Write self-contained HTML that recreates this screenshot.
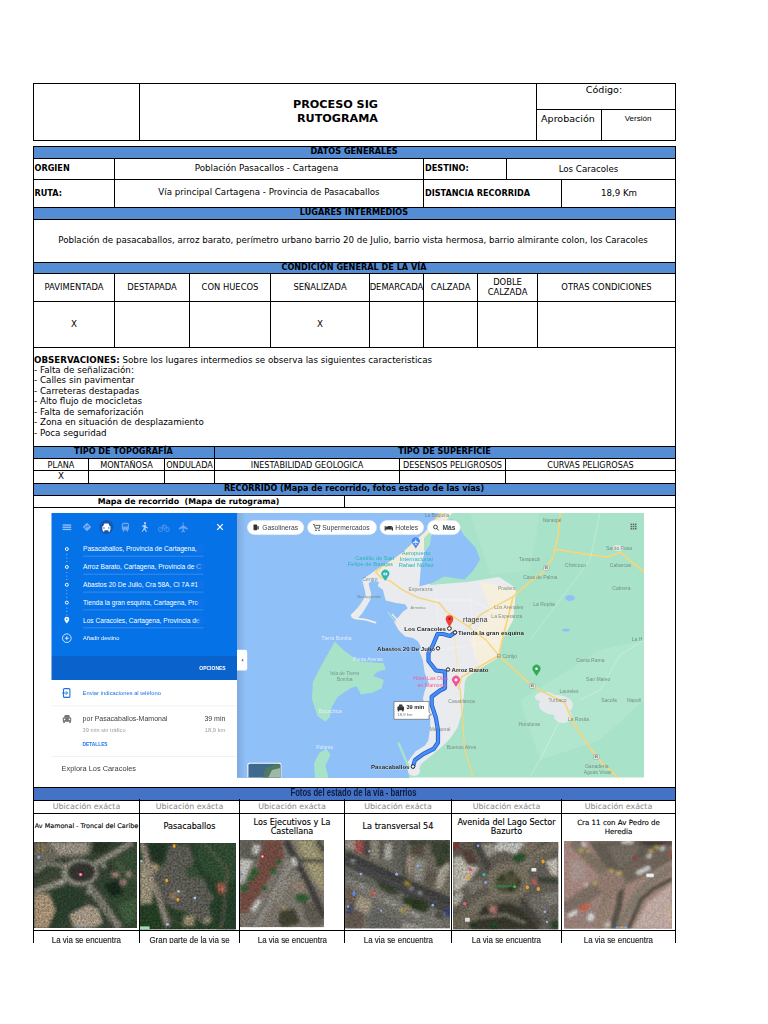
<!DOCTYPE html><html><head><meta charset="utf-8"><title>Rutograma</title><style>html,body{margin:0;padding:0;background:#fff;}body{width:768px;height:1024px;position:relative;overflow:hidden;}svg{position:absolute;display:block;}svg text{font-family:'Liberation Sans',sans-serif;}</style></head><body>
<div style="position:absolute;left:33px;top:83px;width:643px;height:1px;background:#000;"></div>
<div style="position:absolute;left:33px;top:140px;width:643px;height:1px;background:#000;"></div>
<div style="position:absolute;left:33px;top:83px;width:1px;height:58px;background:#000;"></div>
<div style="position:absolute;left:675px;top:83px;width:1px;height:58px;background:#000;"></div>
<div style="position:absolute;left:139px;top:83px;width:1px;height:58px;background:#000;"></div>
<div style="position:absolute;left:536px;top:83px;width:1px;height:58px;background:#000;"></div>
<div style="position:absolute;left:536px;top:109px;width:139px;height:1px;background:#000;"></div>
<div style="position:absolute;left:601px;top:109px;width:1px;height:32px;background:#000;"></div>
<div style="position:absolute;left:139px;top:83px;width:397px;height:57px;display:flex;align-items:center;justify-content:center;text-align:center;font-family:'DejaVu Sans','Liberation Sans',sans-serif;font-size:11.2px;font-weight:bold;color:#000;line-height:14px;white-space:nowrap;padding-top:1px;box-sizing:border-box;"><span><span style="padding-right:4px">PROCESO SIG</span><br>RUTOGRAMA</span></div>
<div style="position:absolute;left:534.5px;top:79px;width:139px;height:22px;display:flex;align-items:center;justify-content:center;text-align:center;font-family:'DejaVu Sans','Liberation Sans',sans-serif;font-size:9.55px;font-weight:normal;color:#000;line-height:1.15;white-space:nowrap;"><span>Código:</span></div>
<div style="position:absolute;left:536px;top:108.5px;width:64px;height:22px;display:flex;align-items:center;justify-content:center;text-align:center;font-family:'DejaVu Sans','Liberation Sans',sans-serif;font-size:9.55px;font-weight:normal;color:#000;line-height:1.15;white-space:nowrap;"><span>Aprobación</span></div>
<div style="position:absolute;left:601px;top:108px;width:74px;height:22px;display:flex;align-items:center;justify-content:center;text-align:center;font-family:'Liberation Sans',sans-serif;font-size:8px;font-weight:normal;color:#000;line-height:1.15;white-space:nowrap;"><span>Versión</span></div>
<div style="position:absolute;left:33px;top:146px;width:1px;height:797px;background:#000;"></div>
<div style="position:absolute;left:675px;top:146px;width:1px;height:797px;background:#000;"></div>
<div style="position:absolute;left:33px;top:146px;width:643px;height:13px;background:#548DD4;"></div>
<div style="position:absolute;left:33px;top:146px;width:643px;height:1px;background:#000;"></div>
<div style="position:absolute;left:33px;top:158px;width:643px;height:1px;background:#000;"></div>
<div style="position:absolute;left:33px;top:147px;width:642px;height:10px;display:flex;align-items:center;justify-content:center;text-align:center;font-family:'DejaVu Sans','Liberation Sans',sans-serif;font-size:8.15px;font-weight:bold;color:#000;line-height:1.15;white-space:nowrap;"><span>DATOS GENERALES</span></div>
<div style="position:absolute;left:33px;top:179px;width:643px;height:1px;background:#000;"></div>
<div style="position:absolute;left:114px;top:158px;width:1px;height:21px;background:#000;"></div>
<div style="position:absolute;left:423px;top:158px;width:1px;height:21px;background:#000;"></div>
<div style="position:absolute;left:506px;top:158px;width:1px;height:21px;background:#000;"></div>
<div style="position:absolute;left:34.5px;top:159px;width:78px;height:19px;display:flex;align-items:center;justify-content:flex-start;text-align:left;font-family:'DejaVu Sans','Liberation Sans',sans-serif;font-size:8.15px;font-weight:bold;color:#000;line-height:1.15;white-space:nowrap;"><span>ORGIEN</span></div>
<div style="position:absolute;left:112.5px;top:159px;width:308px;height:19px;display:flex;align-items:center;justify-content:center;text-align:center;font-family:'DejaVu Sans','Liberation Sans',sans-serif;font-size:8.72px;font-weight:normal;color:#000;line-height:1.15;white-space:nowrap;"><span>Población Pasacallos - Cartagena</span></div>
<div style="position:absolute;left:425px;top:159px;width:80px;height:19px;display:flex;align-items:center;justify-content:flex-start;text-align:left;font-family:'DejaVu Sans','Liberation Sans',sans-serif;font-size:8.15px;font-weight:bold;color:#000;line-height:1.15;white-space:nowrap;"><span>DESTINO:</span></div>
<div style="position:absolute;left:504px;top:160px;width:169px;height:19px;display:flex;align-items:center;justify-content:center;text-align:center;font-family:'DejaVu Sans','Liberation Sans',sans-serif;font-size:8.67px;font-weight:normal;color:#000;line-height:1.15;white-space:nowrap;"><span>Los Caracoles</span></div>
<div style="position:absolute;left:114px;top:179px;width:1px;height:28px;background:#000;"></div>
<div style="position:absolute;left:423px;top:179px;width:1px;height:28px;background:#000;"></div>
<div style="position:absolute;left:561px;top:179px;width:1px;height:28px;background:#000;"></div>
<div style="position:absolute;left:34.5px;top:181px;width:78px;height:26px;display:flex;align-items:center;justify-content:flex-start;text-align:left;font-family:'DejaVu Sans','Liberation Sans',sans-serif;font-size:8.15px;font-weight:bold;color:#000;line-height:1.15;white-space:nowrap;"><span>RUTA:</span></div>
<div style="position:absolute;left:115px;top:180px;width:308px;height:26px;display:flex;align-items:center;justify-content:center;text-align:center;font-family:'DejaVu Sans','Liberation Sans',sans-serif;font-size:8.67px;font-weight:normal;color:#000;line-height:1.15;white-space:nowrap;"><span>Vía principal Cartagena - Provincia de Pasacaballos</span></div>
<div style="position:absolute;left:425px;top:181px;width:136px;height:26px;display:flex;align-items:center;justify-content:flex-start;text-align:left;font-family:'DejaVu Sans','Liberation Sans',sans-serif;font-size:8.15px;font-weight:bold;color:#000;line-height:1.15;white-space:nowrap;"><span>DISTANCIA RECORRIDA</span></div>
<div style="position:absolute;left:562px;top:181px;width:114px;height:26px;display:flex;align-items:center;justify-content:center;text-align:center;font-family:'DejaVu Sans','Liberation Sans',sans-serif;font-size:8.67px;font-weight:normal;color:#000;line-height:1.15;white-space:nowrap;"><span>18,9 Km</span></div>
<div style="position:absolute;left:33px;top:207px;width:643px;height:13px;background:#548DD4;"></div>
<div style="position:absolute;left:33px;top:207px;width:643px;height:1px;background:#000;"></div>
<div style="position:absolute;left:33px;top:219px;width:643px;height:1px;background:#000;"></div>
<div style="position:absolute;left:33px;top:208px;width:642px;height:10px;display:flex;align-items:center;justify-content:center;text-align:center;font-family:'DejaVu Sans','Liberation Sans',sans-serif;font-size:8.15px;font-weight:bold;color:#000;line-height:1.15;white-space:nowrap;"><span>LUGARES INTERMEDIOS</span></div>
<div style="position:absolute;left:32px;top:220px;width:642px;height:41px;display:flex;align-items:center;justify-content:center;text-align:center;font-family:'DejaVu Sans','Liberation Sans',sans-serif;font-size:8.67px;font-weight:normal;color:#000;line-height:1.15;white-space:nowrap;"><span>Población de pasacaballos, arroz barato, perímetro urbano barrio 20 de Julio, barrio vista hermosa, barrio almirante colon, los Caracoles</span></div>
<div style="position:absolute;left:33px;top:262px;width:643px;height:12px;background:#548DD4;"></div>
<div style="position:absolute;left:33px;top:262px;width:643px;height:1px;background:#000;"></div>
<div style="position:absolute;left:33px;top:273px;width:643px;height:1px;background:#000;"></div>
<div style="position:absolute;left:33px;top:263px;width:642px;height:9px;display:flex;align-items:center;justify-content:center;text-align:center;font-family:'DejaVu Sans','Liberation Sans',sans-serif;font-size:8.15px;font-weight:bold;color:#000;line-height:1.15;white-space:nowrap;"><span>CONDICIÓN GENERAL DE LA VÍA</span></div>
<div style="position:absolute;left:114px;top:273px;width:1px;height:75px;background:#000;"></div>
<div style="position:absolute;left:189px;top:273px;width:1px;height:75px;background:#000;"></div>
<div style="position:absolute;left:270px;top:273px;width:1px;height:75px;background:#000;"></div>
<div style="position:absolute;left:369px;top:273px;width:1px;height:75px;background:#000;"></div>
<div style="position:absolute;left:423px;top:273px;width:1px;height:75px;background:#000;"></div>
<div style="position:absolute;left:477px;top:273px;width:1px;height:75px;background:#000;"></div>
<div style="position:absolute;left:537px;top:273px;width:1px;height:75px;background:#000;"></div>
<div style="position:absolute;left:33px;top:301px;width:643px;height:1px;background:#000;"></div>
<div style="position:absolute;left:33px;top:347px;width:643px;height:1px;background:#000;"></div>
<div style="position:absolute;left:34px;top:274px;width:80px;height:27px;display:flex;align-items:center;justify-content:center;text-align:center;font-family:'DejaVu Sans','Liberation Sans',sans-serif;font-size:8.4px;font-weight:normal;color:#000;line-height:9.5px;white-space:nowrap;"><span>PAVIMENTADA</span></div>
<div style="position:absolute;left:115px;top:274px;width:74px;height:27px;display:flex;align-items:center;justify-content:center;text-align:center;font-family:'DejaVu Sans','Liberation Sans',sans-serif;font-size:8.4px;font-weight:normal;color:#000;line-height:9.5px;white-space:nowrap;"><span>DESTAPADA</span></div>
<div style="position:absolute;left:190px;top:274px;width:80px;height:27px;display:flex;align-items:center;justify-content:center;text-align:center;font-family:'DejaVu Sans','Liberation Sans',sans-serif;font-size:8.4px;font-weight:normal;color:#000;line-height:9.5px;white-space:nowrap;"><span>CON HUECOS</span></div>
<div style="position:absolute;left:271px;top:274px;width:98px;height:27px;display:flex;align-items:center;justify-content:center;text-align:center;font-family:'DejaVu Sans','Liberation Sans',sans-serif;font-size:8.4px;font-weight:normal;color:#000;line-height:9.5px;white-space:nowrap;"><span>SEÑALIZADA</span></div>
<div style="position:absolute;left:370px;top:274px;width:53px;height:27px;display:flex;align-items:center;justify-content:center;text-align:center;font-family:'DejaVu Sans','Liberation Sans',sans-serif;font-size:8.4px;font-weight:normal;color:#000;line-height:9.5px;white-space:nowrap;"><span>DEMARCADA</span></div>
<div style="position:absolute;left:424px;top:274px;width:53px;height:27px;display:flex;align-items:center;justify-content:center;text-align:center;font-family:'DejaVu Sans','Liberation Sans',sans-serif;font-size:8.4px;font-weight:normal;color:#000;line-height:9.5px;white-space:nowrap;"><span>CALZADA</span></div>
<div style="position:absolute;left:478px;top:274px;width:59px;height:27px;display:flex;align-items:center;justify-content:center;text-align:center;font-family:'DejaVu Sans','Liberation Sans',sans-serif;font-size:8.4px;font-weight:normal;color:#000;line-height:9.5px;white-space:nowrap;"><span>DOBLE<br>CALZADA</span></div>
<div style="position:absolute;left:538px;top:274px;width:137px;height:27px;display:flex;align-items:center;justify-content:center;text-align:center;font-family:'DejaVu Sans','Liberation Sans',sans-serif;font-size:8.4px;font-weight:normal;color:#000;line-height:9.5px;white-space:nowrap;"><span>OTRAS CONDICIONES</span></div>
<div style="position:absolute;left:34px;top:302px;width:80px;height:45px;display:flex;align-items:center;justify-content:center;text-align:center;font-family:'DejaVu Sans','Liberation Sans',sans-serif;font-size:8.67px;font-weight:normal;color:#000;line-height:1.15;white-space:nowrap;"><span>X</span></div>
<div style="position:absolute;left:271px;top:302px;width:98px;height:45px;display:flex;align-items:center;justify-content:center;text-align:center;font-family:'DejaVu Sans','Liberation Sans',sans-serif;font-size:8.67px;font-weight:normal;color:#000;line-height:1.15;white-space:nowrap;"><span>X</span></div>
<div style="position:absolute;left:34px;top:354.5px;font-family:'DejaVu Sans','Liberation Sans',sans-serif;font-size:8.74px;line-height:10.47px;white-space:nowrap;"><b style="font-size:8.7px">OBSERVACIONES:</b> Sobre los lugares intermedios se observa las siguientes caracteristicas<br>- Falta de señalización:<br>- Calles sin pavimentar<br>- Carreteras destapadas<br>- Alto flujo de mocicletas<br>- Falta de semaforización<br>- Zona en situación de desplazamiento<br>- Poca seguridad</div>
<div style="position:absolute;left:33px;top:446px;width:182px;height:13px;background:#548DD4;"></div>
<div style="position:absolute;left:33px;top:446px;width:182px;height:1px;background:#000;"></div>
<div style="position:absolute;left:33px;top:458px;width:182px;height:1px;background:#000;"></div>
<div style="position:absolute;left:33px;top:447px;width:181px;height:10px;display:flex;align-items:center;justify-content:center;text-align:center;font-family:'DejaVu Sans','Liberation Sans',sans-serif;font-size:8.15px;font-weight:bold;color:#000;line-height:1.15;white-space:nowrap;"><span>TIPO DE TOPOGRAFÍA</span></div>
<div style="position:absolute;left:214px;top:446px;width:462px;height:13px;background:#548DD4;"></div>
<div style="position:absolute;left:214px;top:446px;width:462px;height:1px;background:#000;"></div>
<div style="position:absolute;left:214px;top:458px;width:462px;height:1px;background:#000;"></div>
<div style="position:absolute;left:214px;top:447px;width:461px;height:10px;display:flex;align-items:center;justify-content:center;text-align:center;font-family:'DejaVu Sans','Liberation Sans',sans-serif;font-size:8.15px;font-weight:bold;color:#000;line-height:1.15;white-space:nowrap;"><span>TIPO DE SUPERFICIE</span></div>
<div style="position:absolute;left:214px;top:446px;width:1px;height:12px;background:#000;"></div>
<div style="position:absolute;left:88px;top:458px;width:1px;height:25px;background:#000;"></div>
<div style="position:absolute;left:164px;top:458px;width:1px;height:25px;background:#000;"></div>
<div style="position:absolute;left:214px;top:458px;width:1px;height:25px;background:#000;"></div>
<div style="position:absolute;left:399px;top:458px;width:1px;height:25px;background:#000;"></div>
<div style="position:absolute;left:505px;top:458px;width:1px;height:25px;background:#000;"></div>
<div style="position:absolute;left:33px;top:470px;width:643px;height:1px;background:#000;"></div>
<div style="position:absolute;left:34px;top:460px;width:54px;height:11px;display:flex;align-items:center;justify-content:center;text-align:center;font-family:'DejaVu Sans','Liberation Sans',sans-serif;font-size:8.15px;font-weight:normal;color:#000;line-height:1.15;white-space:nowrap;"><span>PLANA</span></div>
<div style="position:absolute;left:89px;top:460px;width:75px;height:11px;display:flex;align-items:center;justify-content:center;text-align:center;font-family:'DejaVu Sans','Liberation Sans',sans-serif;font-size:8.15px;font-weight:normal;color:#000;line-height:1.15;white-space:nowrap;"><span>MONTAÑOSA</span></div>
<div style="position:absolute;left:165px;top:460px;width:49px;height:11px;display:flex;align-items:center;justify-content:center;text-align:center;font-family:'DejaVu Sans','Liberation Sans',sans-serif;font-size:8.15px;font-weight:normal;color:#000;line-height:1.15;white-space:nowrap;"><span>ONDULADA</span></div>
<div style="position:absolute;left:215px;top:460px;width:184px;height:11px;display:flex;align-items:center;justify-content:center;text-align:center;font-family:'DejaVu Sans','Liberation Sans',sans-serif;font-size:8.15px;font-weight:normal;color:#000;line-height:1.15;white-space:nowrap;"><span>INESTABILIDAD GEOLOGICA</span></div>
<div style="position:absolute;left:400px;top:460px;width:105px;height:11px;display:flex;align-items:center;justify-content:center;text-align:center;font-family:'DejaVu Sans','Liberation Sans',sans-serif;font-size:8.15px;font-weight:normal;color:#000;line-height:1.15;white-space:nowrap;"><span>DESENSOS PELIGROSOS</span></div>
<div style="position:absolute;left:506px;top:460px;width:169px;height:11px;display:flex;align-items:center;justify-content:center;text-align:center;font-family:'DejaVu Sans','Liberation Sans',sans-serif;font-size:8.15px;font-weight:normal;color:#000;line-height:1.15;white-space:nowrap;"><span>CURVAS PELIGROSAS</span></div>
<div style="position:absolute;left:34px;top:471px;width:54px;height:12px;display:flex;align-items:center;justify-content:center;text-align:center;font-family:'DejaVu Sans','Liberation Sans',sans-serif;font-size:8.67px;font-weight:normal;color:#000;line-height:1.15;white-space:nowrap;"><span>X</span></div>
<div style="position:absolute;left:33px;top:483px;width:643px;height:13px;background:#548DD4;"></div>
<div style="position:absolute;left:33px;top:483px;width:643px;height:1px;background:#000;"></div>
<div style="position:absolute;left:33px;top:495px;width:643px;height:1px;background:#000;"></div>
<div style="position:absolute;left:33px;top:484px;width:642px;height:10px;display:flex;align-items:center;justify-content:center;text-align:center;font-family:'DejaVu Sans','Liberation Sans',sans-serif;font-size:8.05px;font-weight:bold;color:#000;line-height:1.15;white-space:nowrap;"><span>RECORRIDO (Mapa de recorrido, fotos estado de las vías)</span></div>
<div style="position:absolute;left:33px;top:507px;width:643px;height:1px;background:#000;"></div>
<div style="position:absolute;left:344px;top:495px;width:1px;height:12px;background:#000;"></div>
<div style="position:absolute;left:33px;top:496px;width:311px;height:11px;display:flex;align-items:center;justify-content:center;text-align:center;font-family:'DejaVu Sans','Liberation Sans',sans-serif;font-size:7.88px;font-weight:bold;color:#000;line-height:1.15;white-space:nowrap;white-space:pre;"><span>Mapa de recorrido  (Mapa de rutograma)</span></div>
<svg style="left:50px;top:512px;width:596px;height:267px;" viewBox="50 512 596 267">
<defs>
<clipPath id="mapclip"><rect x="237" y="513" width="407" height="264.5"/></clipPath>
<filter id="soft" x="-5%" y="-5%" width="110%" height="110%"><feGaussianBlur stdDeviation="0.45"/></filter>
<linearGradient id="shd" x1="0" x2="1" y1="0" y2="0"><stop offset="0" stop-color="#405070" stop-opacity=".2"/><stop offset="1" stop-color="#405070" stop-opacity="0"/></linearGradient>
</defs>
<!-- ===== map ===== -->
<g clip-path="url(#mapclip)">
<rect x="237" y="513" width="407" height="265" fill="#a8e2c9"/>
<g filter="url(#soft)">
<!-- lighter green variations -->
<path d="M520 700 L600 650 L644 640 L644 700 L600 740 L540 760 Z" fill="#b6e8d2" opacity=".6"/>
<path d="M470 513 L540 513 L530 570 L490 575 Z" fill="#b6e8d2" opacity=".5"/>
<!-- urban -->
<polygon points="425,513 452,513 435,533 428,560 430,585 467,582 499,577 516,588 513,620 502,640 499,657 467,677 464.8,682 463,709.4 457.5,727.6 450.2,738.5 442.9,745.8 432,755 421,764 418,772 405,772 400,640 340,620 360,570 400,540" fill="#e9ebee"/>
<polygon points="480,582 516,588 513,620 502,640 499,657 480,668 470,640 490,610" fill="#f6efdd"/>
<polygon points="425,513 452,513 440,528 428,545 400,560 380,575 370,572 395,548" fill="#f3ecd8"/>
<ellipse cx="556" cy="705" rx="17" ry="10" fill="#e6e9ec"/>
<ellipse cx="563" cy="716" rx="9" ry="7" fill="#e6e9ec"/>
<ellipse cx="545" cy="697" rx="10" ry="5" fill="#e6e9ec"/>
<ellipse cx="618" cy="548" rx="6" ry="3" fill="#dfe8e2"/>
<!-- roads -->
<g fill="none" stroke="#f7d57a" stroke-width="1.7" stroke-linecap="round" stroke-linejoin="round">
<path d="M560.4 513 L557.5 539.4 L553.2 556.6 L544.6 570.9 L527.4 583.8 L513.1 596.7 L507.4 619.6 L501.6 642.5 L498.8 655.4"/>
<path d="M498.8 655.4 L516 671.2 L530.3 684.1 L544.6 692.7 L564.7 702.7 L573.3 722.8 L590.5 748.6 L601.9 762.9 L617.7 777"/>
<path d="M556.1 549.4 L579 553.1 L607.7 557.1 L620.5 552.3 L644 572"/>
<path d="M498.8 655.4 L481.6 665.5 L461.5 676.9 L458.7 688.4"/>
<path d="M460 688.4 L463 722.8 L464.4 748.6 L473 777" stroke-width="1.3"/>
<path d="M513.1 596.7 L481.6 613.9 L468.5 626.7 L446.7 612.1 L439.4 603 L417.5 597.5 L402.9 590.2 L390.2 581.1 L381 577.4 L375.6 572 L402.9 548.3 L424.8 530 L439.4 515.5 L442 512" stroke-width="1.5"/>
<path d="M468.5 626.7 L486 640 L498.8 655.4" stroke-width="1.3"/>
<path d="M447 612 L455 640 L458 676" stroke="#fbe6ad" stroke-width="1.1"/>
</g>
<g fill="none" stroke="#ffffff" stroke-width=".6" opacity=".45">
<path d="M430 600 L470 600 L495 612"/><path d="M440 650 L470 645 L498 640"/><path d="M450 700 L461 700"/><path d="M435 590 L440 640"/><path d="M470 590 L475 660"/>
<path d="M644 640 L620 655 L600 690 L580 700"/><path d="M560 720 L540 760 L530 777"/><path d="M600 513 L590 560 L560 600 L530 640"/>
</g>
<!-- small lakes -->
<ellipse cx="570" cy="598" rx="5" ry="3" fill="#8fc0f8"/>
<ellipse cx="566" cy="630" rx="4" ry="1.6" fill="#8fc0f8"/>
<!-- sea -->
<polygon points="237,513 439.4,513 424.8,531.9 402.9,551.9 392.1,560 379,567.8 370,574.3 362.1,579.5 364.7,590 366,597.8 359.5,608.2 351,614.7 351.7,618 357,619.2 362.1,613.4 364.7,609.5 370,600.4 371.25,593.9 368.6,583.4 372,580.5 379,582.1 377.8,586 383,590 385.6,600.4 396,603 405.1,604.3 407.7,608.2 402.5,612.1 397.3,618.6 394,622 398.6,630.3 405.1,636.5 412.9,638 418.1,641.5 421,647 419.2,651 422.9,660.2 424.7,672.9 428.3,682 424.7,691.1 422.9,698.4 426,708 430.2,718.5 430.2,727.6 428.3,740.4 424.7,745.8 415.6,751.3 410.1,758.6 406.5,764 408,771 409.5,778 237,778" fill="#8fc0f8"/>
<path d="M355 618.3 L366 619.6 L375.5 622.6" stroke="#f3f0e6" stroke-width="1.8" fill="none" stroke-linecap="round"/>
<path d="M351.5 616 L360 606.5 L366 597" stroke="#f6f1e2" stroke-width="2.2" fill="none" opacity=".8"/>
<!-- lagoon -->
<polygon points="447,521 452,519 457,522 463,534 475.8,548 480.1,559.4 473,570.9 464.4,579.5 444.3,576.6 432.1,583 419.3,586.6 421.1,564.7 426.6,546.5 432.1,533.7 439.4,526 444,522" fill="#8fc0f8"/>
<polygon points="424,538 432,530 430,545 424,552" fill="#a8e2c9"/>
<!-- inner bay islands -->
<path d="M392 614 L399 622 L404 630" stroke="#e9ebee" stroke-width="1.6" fill="none"/><path d="M388 612 L396 623" stroke="#b9e6cf" stroke-width="1" fill="none"/>
<!-- Tierra Bomba -->
<polygon points="334.8,641.5 344.2,650.8 358.8,661.3 383.8,663.3 385.8,669.6 377.5,671.7 373.3,675.8 383.8,680 381.7,688.3 373.3,692.5 360.8,694.6 356.7,686.3 350.4,688.3 337.9,696.7 331.7,707.1 329.6,717.5 325.4,721.7 317.1,715.4 311.9,698.8 312.9,682.1 321.3,665.4 329.6,650.8" fill="#a8e2c9"/>
<!-- Baru -->
<polygon points="315,778 314,763.3 319.2,752.9 326.5,748.8 330.6,755 325.4,765.4 328.5,778" fill="#a8e2c9"/>
<path d="M398.3 742.5 L404 756 L413 777" stroke="#a8e2c9" stroke-width="2.4" fill="none"/>
<ellipse cx="414" cy="771" rx="6" ry="5" fill="#e9ebee"/>
</g>
<!-- route -->
<path d="M455 632.5 L450 636 L443 634 L437.5 634 L433 645 L428.5 653 L428.5 661 L436 670.5 L445 671.7 L445 688 L440 690.5 L431.7 696.7 L431.7 705 L435.8 717.5 L438 730 L438 742.5 L433.75 748.75 L423.3 754 L415 760 L413 766.5" fill="none" stroke="#1a5fd0" stroke-width="4.2" stroke-linejoin="round" stroke-linecap="round"/>
<path d="M455 632.5 L450 636 L443 634 L437.5 634 L433 645 L428.5 653 L428.5 661 L436 670.5 L445 671.7 L445 688 L440 690.5 L431.7 696.7 L431.7 705 L435.8 717.5 L438 730 L438 742.5 L433.75 748.75 L423.3 754 L415 760 L413 766.5" fill="none" stroke="#4a8df7" stroke-width="2.6" stroke-linejoin="round" stroke-linecap="round"/>
<!-- place labels -->
<g font-size="5" fill="#6f7f76" text-anchor="middle" opacity=".85">
<text x="552" y="521.5">Naranjal</text><text x="619" y="550">Santa Rosa</text><text x="529.4" y="561">Tarapacá</text><text x="575.5" y="567">Chiricoco</text><text x="620.5" y="567">Cabarcas</text><text x="540.3" y="579">Casa de Palma</text><text x="621.4" y="590">Cabrera</text><text x="506.8" y="590">Pradera</text><text x="544" y="606">La Ropita</text><text x="508.8" y="609">Los Arenales</text><text x="506.8" y="618">La Esperanza</text><text x="506.8" y="658">El Cortijo</text><text x="590.4" y="661.5">Canta Rama</text><text x="598.2" y="680.5">San Mateo</text><text x="569" y="692.5">Laureles</text><text x="557.5" y="701.5">Turbaco</text><text x="609" y="701.5">Sacofa</text><text x="634" y="701.5">Napoli</text><text x="578.4" y="721">La Rosita</text><text x="529.4" y="726">Honduras</text><text x="461.5" y="703">Casablanca</text><text x="440" y="731">Mamonal</text><text x="461.5" y="748.5">Buenos Aires</text><text x="596.8" y="768">Ganadería</text><text x="597.6" y="774">Aguas Vivas</text><text x="420.5" y="590.5">Esperanza</text><text x="437" y="517">La Boquilla</text><text x="370" y="581.2">Centro</text><text x="369" y="598.3" font-size="4.4">Bocagrande</text><text x="418" y="609" font-size="4">Armenia</text><text x="637" y="641">La H</text>
</g>
<g font-size="5" fill="#e8f0fe" text-anchor="middle" opacity=".95">
<text x="336.6" y="640">Tierra Bomba</text><text x="368.1" y="660.5">Punta Arenas</text><text x="330.3" y="713">Bocachica</text><text x="324.6" y="749">Polonia</text>
</g>
<g font-size="5" fill="#7d9a86" text-anchor="middle"><text x="344.6" y="675">Isla de Tierra</text><text x="344.6" y="681">Bomba</text></g>
<g font-size="5.8" fill="#2bb5b5" text-anchor="middle"><text x="374.7" y="560">Castillo de San</text><text x="370.4" y="566">Felipe de Barajas</text><text x="416.2" y="554.5">Aeropuerto</text><text x="416.2" y="560.5">Internacional</text><text x="416.2" y="567">Rafael Núñez</text></g>
<g font-size="5.3" fill="#f0579b" text-anchor="middle"><text x="430.6" y="680">Hotel Las Olas</text><text x="432" y="686.5">en Mamonal</text></g>
<text x="463" y="622" font-size="7.2" fill="#3a3a3a" text-anchor="start">rtagena</text>
<!-- waypoint labels -->
<g font-size="6.1" fill="#1f1f1f" font-weight="bold" stroke="#fff" stroke-width=".25" paint-order="stroke">
<text x="446" y="630.5" text-anchor="end">Los Caracoles</text>
<text x="458" y="634.5">Tienda la gran esquina</text>
<text x="435" y="650.5" text-anchor="end">Abastos 20 De Julio</text>
<text x="451.5" y="671.5">Arroz Barato</text>
<text x="409.5" y="768.5" text-anchor="end">Pasacaballos</text>
</g>
<g fill="#fff" stroke="#222" stroke-width="1">
<circle cx="449.4" cy="628.5" r="1.9"/><circle cx="455" cy="632.5" r="1.7"/><circle cx="438" cy="648.3" r="1.7"/><circle cx="448" cy="669.5" r="1.7"/><circle cx="413" cy="766.5" r="1.8"/>
</g>
<!-- red pin -->
<path d="M449.5 627 C446.5 622 445.7 620.5 445.7 619 A3.8 3.8 0 0 1 453.3 619 C453.3 620.5 452.5 622 449.5 627Z" fill="#ea4335"/>
<circle cx="449.5" cy="618.8" r="1.2" fill="#b31412"/>
<!-- poi pins -->
<path d="M415.8 548.6 l-3.3 -5 a4 4 0 1 1 6.6 0z" fill="#4285f4"/><path d="M415.8 538.8 v2 l2.6 1.7 v.6 l-2.6 -.8 v1.5 l.8 .6 v.4 l-.8 -.2 l-.8 .2 v-.4 l.8 -.6 v-1.5 l-2.6 .8 v-.6 l2.6 -1.7z" fill="#fff" stroke="#fff" stroke-width=".3"/>
<path d="M385.3 581 l-3.3 -5 a4 4 0 1 1 6.6 0z" fill="#2bb5b5"/><rect x="383.5" y="572.7" width="3.6" height="2.6" rx=".5" fill="#fff"/><circle cx="385.3" cy="574" r=".8" fill="#2bb5b5"/>
<path d="M536.5 676 l-3.3 -5 a4 4 0 1 1 6.6 0z" fill="#34a853"/><circle cx="536.5" cy="668.8" r="1.3" fill="#fff"/>
<path d="M456 687 l-3.3 -5 a4 4 0 1 1 6.6 0z" fill="#f0579b"/><circle cx="456" cy="679.8" r="1.5" fill="#fff"/>
<!-- route shields -->
<g fill="#fff" stroke="#777" stroke-width=".4"><rect x="543.5" y="565.5" width="5.5" height="4.6" rx="1"/><rect x="529.5" y="683.5" width="5.5" height="4.6" rx="1"/><rect x="593.5" y="754.5" width="5.5" height="4.6" rx="1"/></g>
<g font-size="3.2" fill="#444" text-anchor="middle" font-weight="bold"><text x="546.3" y="569.2">90</text><text x="532.3" y="687.2">90</text><text x="596.3" y="758.2">90</text></g>
<!-- duration box -->
<path d="M394 701.5 H429 V712 L431.5 715 L429 715 V719.3 H394 Z" fill="#fff" stroke="#555" stroke-width=".6"/>
<g fill="#333"><rect x="397.4" y="706.6" width="6.6" height="3.6" rx=".8"/><path d="M398.4 706.8 L399.3 704.4 H402.1 L403 706.8Z"/><rect x="397.8" y="709.8" width="1.4" height="1.6"/><rect x="402.2" y="709.8" width="1.4" height="1.6"/></g>
<text x="406.5" y="709.3" font-size="5.6" font-weight="bold" fill="#222">39 min</text>
<text x="397.5" y="716.3" font-size="4.2" fill="#777">18,9 km</text>
<!-- chips -->
<g fill="#fff" stroke="#d6dbe3" stroke-width=".4">
<rect x="247.2" y="520.3" width="56.7" height="14.4" rx="7.2"/><rect x="307.4" y="520.3" width="69.3" height="14.4" rx="7.2"/><rect x="379.8" y="520.3" width="44" height="14.4" rx="7.2"/><rect x="427.3" y="520.3" width="33" height="14.4" rx="7.2"/>
</g>
<g font-size="6.7" fill="#3c4043">
<text x="262.3" y="529.8">Gasolineras</text><text x="322.3" y="529.8">Supermercados</text><text x="395.3" y="529.8">Hoteles</text><text x="442.5" y="529.8" font-weight="bold">Más</text>
</g>
<g fill="#333">
<rect x="253.5" y="524.6" width="3.6" height="5.6" rx=".6"/><rect x="257.4" y="526" width="1.3" height="3.6" rx=".5"/>
<path d="M313 524.6 h1.4 l.9 3.6 h4 l.8-2.8 h-4.6" fill="none" stroke="#333" stroke-width=".8"/><circle cx="316" cy="530.2" r=".8"/><circle cx="319" cy="530.2" r=".8"/>
<path d="M385.2 526 v4.6 M385.2 529 h7.2 v1.6 M392.4 529 v-1.2 a1.2 1.2 0 0 0 -1.2 -1.2 h-3.2 v2.4" fill="none" stroke="#222" stroke-width="1"/><rect x="386" y="526.6" width="5.6" height="2.4"/>
<circle cx="435.5" cy="527" r="1.9" fill="none" stroke="#333" stroke-width=".9"/><path d="M436.9 528.5 l1.8 1.9" stroke="#333" stroke-width=".9"/>
</g>
<g fill="#5f6368"><rect x="630.6" y="523.6" width="1.5" height="1.5"/><rect x="632.8" y="523.6" width="1.5" height="1.5"/><rect x="635" y="523.6" width="1.5" height="1.5"/><rect x="630.6" y="525.8" width="1.5" height="1.5"/><rect x="632.8" y="525.8" width="1.5" height="1.5"/><rect x="635" y="525.8" width="1.5" height="1.5"/><rect x="630.6" y="528" width="1.5" height="1.5"/><rect x="632.8" y="528" width="1.5" height="1.5"/><rect x="635" y="528" width="1.5" height="1.5"/></g>
<rect x="237" y="513" width="9" height="264.5" fill="url(#shd)"/>
<!-- collapse handle -->
<path d="M237 649.7 H245 a2.2 2.2 0 0 1 2.2 2.2 V668.4 a2.2 2.2 0 0 1 -2.2 2.2 H237Z" fill="#fff"/>
<path d="M243.2 658.6 L241.4 660.2 L243.2 661.8Z" fill="#5f6368"/>
<!-- satellite thumb -->
<rect x="247.4" y="762.7" width="34" height="18" rx="2" fill="#fff"/>
<rect x="248.4" y="763.7" width="32" height="17" rx="1.5" fill="#3e6a8e"/>
<path d="M262 778 L266 768 L276 764 L280.4 764 L280.4 778Z" fill="#4e7a62"/>
<path d="M268 778 L272 770 L280.4 768 L280.4 778Z" fill="#9fb8a8"/>
</g>
<!-- ===== left panel ===== -->
<rect x="51.5" y="513" width="185.5" height="264.5" fill="#fff"/>
<rect x="51.5" y="513" width="185.5" height="143" fill="#0572e8"/>
<rect x="51.5" y="656" width="185.5" height="24" fill="#0a63cd"/>
<!-- mode icons -->
<g fill="#9cc2f5">
<rect x="62.6" y="524.4" width="8.6" height="1.3"/><rect x="62.6" y="526.6" width="8.6" height="1.3"/><rect x="62.6" y="528.8" width="8.6" height="1.3"/>
</g>
<path d="M87 522.8 L91.2 527 L87 531.2 L82.8 527Z" fill="#7fb0f3"/><path d="M85.4 528.4 V526.4 H88.4 M87.4 525.2 L88.8 526.4 L87.4 527.6" fill="none" stroke="#1a73e8" stroke-width=".8"/>
<circle cx="106.4" cy="527" r="7" fill="#1a56b0"/>
<g fill="#fff"><rect x="102.3" y="526" width="8.2" height="4.2" rx=".9"/><path d="M103.2 526.3 L104.3 523.6 H108.5 L109.6 526.3Z"/><rect x="102.8" y="529.6" width="1.6" height="2"/><rect x="108.4" y="529.6" width="1.6" height="2"/></g>
<g fill="#1a73e8"><circle cx="104" cy="528" r=".8"/><circle cx="108.8" cy="528" r=".8"/></g>
<g fill="#6fa6f1"><rect x="121.8" y="522.8" width="7.2" height="7.4" rx="1.6"/><rect x="122.8" y="530" width="1.4" height="1.6"/><rect x="126.6" y="530" width="1.4" height="1.6"/></g>
<rect x="122.9" y="524" width="5" height="2.6" fill="#1a73e8"/>
<g fill="#b5d0f7"><circle cx="145" cy="523.2" r="1.1"/><path d="M143.2 525 L145.6 524.6 L146.6 527 L148.2 527.8 L147.8 528.6 L145.8 527.8 L145.4 529 L147 531.6 L146.2 532 L144.2 529.4 L142.6 532 L141.8 531.6 L143.6 528.4 L143.8 526 L142.4 527.2 L142 526.6Z"/></g>
<g fill="none" stroke="#5d9bf0" stroke-width=".8"><circle cx="160.6" cy="529.4" r="2.2"/><circle cx="167" cy="529.4" r="2.2"/><path d="M160.6 529.4 L163.2 525 H165.6 L167 529.4 M163.2 525 L164.4 529.4"/></g>
<path d="M183.2 522.4 V525.4 L187.4 528.2 V529.2 L183.6 528 V530.4 L184.8 531.4 V532 L183.2 531.6 L181.6 532 V531.4 L182.8 530.4 V528 L179 529.2 V528.2 L183.2 525.4Z" fill="#6fa6f1" stroke="#6fa6f1" stroke-width=".5"/>
<path d="M217.2 524.2 L222.8 529.8 M222.8 524.2 L217.2 529.8" stroke="#fff" stroke-width="1.2"/>
<!-- waypoints -->
<g fill="none" stroke="#fff" stroke-width="1"><circle cx="66.8" cy="549" r="1.5"/><circle cx="66.8" cy="567" r="1.5"/><circle cx="66.8" cy="584.8" r="1.5"/><circle cx="66.8" cy="602.6" r="1.5"/></g>
<g fill="#a9c9f6"><circle cx="66.8" cy="554.5" r=".55"/><circle cx="66.8" cy="558" r=".55"/><circle cx="66.8" cy="561.5" r=".55"/><circle cx="66.8" cy="572.5" r=".55"/><circle cx="66.8" cy="576" r=".55"/><circle cx="66.8" cy="579.5" r=".55"/><circle cx="66.8" cy="590.3" r=".55"/><circle cx="66.8" cy="593.8" r=".55"/><circle cx="66.8" cy="597.3" r=".55"/><circle cx="66.8" cy="608" r=".55"/><circle cx="66.8" cy="611.5" r=".55"/><circle cx="66.8" cy="615" r=".55"/></g>
<path d="M66.8 623.6 C64.8 620.8 64.4 620 64.4 619.2 A2.4 2.4 0 0 1 69.2 619.2 C69.2 620 68.8 620.8 66.8 623.6Z" fill="#fff"/><circle cx="66.8" cy="619.2" r=".8" fill="#1a73e8"/>
<g font-size="6.6" fill="#fff">
<text x="83" y="551">Pasacaballos, Provincia de Cartagena,</text>
<text x="83" y="569">Arroz Barato, Cartagena, Provincia de C</text>
<text x="83" y="587">Abastos 20 De Julio, Cra 58A, Cl 7A #1</text>
<text x="83" y="604.8">Tienda la gran esquina, Cartagena, Pro</text>
<text x="83" y="622.6">Los Caracoles, Cartagena, Provincia de</text>
</g>
<g fill="#1a73e8" opacity=".55"><rect x="197" y="545" width="7" height="8"/><rect x="197" y="563" width="7" height="8"/><rect x="197" y="581" width="7" height="8"/><rect x="197" y="598.8" width="7" height="8"/><rect x="197" y="616.6" width="7" height="8"/></g>
<g stroke="#6ea5f0" stroke-width=".5"><path d="M83 556.2H203.5M83 574.2H203.5M83 592.1H203.5M83 609.9H203.5M83 627.8H203.5"/></g>
<circle cx="66.8" cy="638.2" r="4.3" fill="none" stroke="#fff" stroke-width=".8"/><path d="M64.8 638.2H68.8M66.8 636.2V640.2" stroke="#fff" stroke-width=".8"/>
<text x="83" y="640.2" font-size="5.7" fill="#fff">Añadir destino</text>
<text x="225.7" y="669.8" font-size="5" fill="#fff" font-weight="bold" text-anchor="end">OPCIONES</text>
<!-- white part -->
<rect x="63.5" y="688.6" width="6.4" height="8.8" rx="1" fill="none" stroke="#1a73e8" stroke-width="1.1"/><path d="M62 693H67.4M65.8 691.2L67.6 693L65.8 694.8" stroke="#1a73e8" stroke-width=".9" fill="none"/>
<text x="82.6" y="695" font-size="5.8" fill="#1a73e8">Enviar indicaciones al teléfono</text>
<rect x="51.5" y="705.6" width="185.5" height=".6" fill="#e8eaed"/>
<g fill="#70757a"><rect x="62.8" y="717.4" width="8.4" height="4.4" rx=".9"/><path d="M63.8 717.7 L64.9 714.9 H69.1 L70.2 717.7Z"/><rect x="63.2" y="721.2" width="1.6" height="1.8"/><rect x="69.2" y="721.2" width="1.6" height="1.8"/></g>
<g fill="#fff"><circle cx="64.6" cy="719.4" r=".8"/><circle cx="69.4" cy="719.4" r=".8"/></g>
<text x="82.6" y="721.2" font-size="7" fill="#3c4043">por Pasacaballos-Mamonal</text>
<text x="225.4" y="721.2" font-size="7" fill="#3c4043" text-anchor="end">39 min</text>
<text x="82.6" y="732" font-size="5.7" fill="#9aa0a6">39 min sin tráfico</text>
<text x="225.4" y="732" font-size="5.8" fill="#9aa0a6" text-anchor="end">18,9 km</text>
<text x="82.6" y="745.6" font-size="4.8" fill="#1a73e8" font-weight="bold">DETALLES</text>
<rect x="51.5" y="756" width="185.5" height=".6" fill="#e8eaed"/>
<text x="61.6" y="771.3" font-size="7.4" fill="#3c4043">Explora Los Caracoles</text>
</svg>

<div style="position:absolute;left:33px;top:787px;width:643px;height:13px;background:#4472C4;"></div>
<div style="position:absolute;left:33px;top:787px;width:643px;height:1px;background:#000;"></div>
<div style="position:absolute;left:33px;top:800px;width:643px;height:1px;background:#000;"></div>
<div style="position:absolute;left:32.5px;top:787px;width:642px;height:12px;display:flex;align-items:center;justify-content:center;text-align:center;font-family:'Liberation Sans',sans-serif;font-size:10.4px;font-weight:bold;color:#0f1c44;line-height:1.15;white-space:nowrap;"><span><span style="display:inline-block;transform:scaleX(0.737);transform-origin:center;">Fotos del estado de la vía - barrios</span></span></div>
<div style="position:absolute;left:139px;top:799px;width:1px;height:144px;background:#000;"></div>
<div style="position:absolute;left:239px;top:799px;width:1px;height:144px;background:#000;"></div>
<div style="position:absolute;left:344px;top:799px;width:1px;height:144px;background:#000;"></div>
<div style="position:absolute;left:451px;top:799px;width:1px;height:144px;background:#000;"></div>
<div style="position:absolute;left:561px;top:799px;width:1px;height:144px;background:#000;"></div>
<div style="position:absolute;left:33px;top:813px;width:643px;height:1px;background:#000;"></div>
<div style="position:absolute;left:33px;top:930px;width:643px;height:1px;background:#000;"></div>
<div style="position:absolute;left:34px;top:801px;width:105px;height:12px;display:flex;align-items:center;justify-content:center;text-align:center;font-family:'DejaVu Sans','Liberation Sans',sans-serif;font-size:7.9px;font-weight:normal;color:#858585;line-height:1.15;white-space:nowrap;"><span>Ubicación exácta</span></div>
<div style="position:absolute;left:140px;top:801px;width:99px;height:12px;display:flex;align-items:center;justify-content:center;text-align:center;font-family:'DejaVu Sans','Liberation Sans',sans-serif;font-size:7.9px;font-weight:normal;color:#858585;line-height:1.15;white-space:nowrap;"><span>Ubicación exácta</span></div>
<div style="position:absolute;left:240px;top:801px;width:104px;height:12px;display:flex;align-items:center;justify-content:center;text-align:center;font-family:'DejaVu Sans','Liberation Sans',sans-serif;font-size:7.9px;font-weight:normal;color:#858585;line-height:1.15;white-space:nowrap;"><span>Ubicación exácta</span></div>
<div style="position:absolute;left:345px;top:801px;width:106px;height:12px;display:flex;align-items:center;justify-content:center;text-align:center;font-family:'DejaVu Sans','Liberation Sans',sans-serif;font-size:7.9px;font-weight:normal;color:#858585;line-height:1.15;white-space:nowrap;"><span>Ubicación exácta</span></div>
<div style="position:absolute;left:452px;top:801px;width:109px;height:12px;display:flex;align-items:center;justify-content:center;text-align:center;font-family:'DejaVu Sans','Liberation Sans',sans-serif;font-size:7.9px;font-weight:normal;color:#858585;line-height:1.15;white-space:nowrap;"><span>Ubicación exácta</span></div>
<div style="position:absolute;left:562px;top:801px;width:113px;height:12px;display:flex;align-items:center;justify-content:center;text-align:center;font-family:'DejaVu Sans','Liberation Sans',sans-serif;font-size:7.9px;font-weight:normal;color:#858585;line-height:1.15;white-space:nowrap;"><span>Ubicación exácta</span></div>
<div style="position:absolute;left:34px;top:814px;width:105px;height:26px;display:flex;align-items:center;justify-content:center;text-align:center;font-family:'DejaVu Sans','Liberation Sans',sans-serif;font-size:6.45px;font-weight:normal;color:#000;line-height:9.3px;white-space:nowrap;-webkit-text-stroke:0.12px #000;"><span>Av Mamonal - Troncal del Caribe</span></div>
<div style="position:absolute;left:140px;top:814px;width:99px;height:26px;display:flex;align-items:center;justify-content:center;text-align:center;font-family:'DejaVu Sans','Liberation Sans',sans-serif;font-size:8.1px;font-weight:normal;color:#000;line-height:9.3px;white-space:nowrap;-webkit-text-stroke:0.12px #000;"><span>Pasacaballos</span></div>
<div style="position:absolute;left:240px;top:814px;width:104px;height:26px;display:flex;align-items:center;justify-content:center;text-align:center;font-family:'DejaVu Sans','Liberation Sans',sans-serif;font-size:8.1px;font-weight:normal;color:#000;line-height:9.3px;white-space:nowrap;-webkit-text-stroke:0.12px #000;"><span>Los Ejecutivos y La<br>Castellana</span></div>
<div style="position:absolute;left:345px;top:814px;width:106px;height:26px;display:flex;align-items:center;justify-content:center;text-align:center;font-family:'DejaVu Sans','Liberation Sans',sans-serif;font-size:8.2px;font-weight:normal;color:#000;line-height:9.3px;white-space:nowrap;-webkit-text-stroke:0.12px #000;"><span>La transversal 54</span></div>
<div style="position:absolute;left:452px;top:814px;width:109px;height:26px;display:flex;align-items:center;justify-content:center;text-align:center;font-family:'DejaVu Sans','Liberation Sans',sans-serif;font-size:8.1px;font-weight:normal;color:#000;line-height:9.3px;white-space:nowrap;-webkit-text-stroke:0.12px #000;"><span>Avenida del Lago Sector<br>Bazurto</span></div>
<div style="position:absolute;left:562px;top:814px;width:113px;height:26px;display:flex;align-items:center;justify-content:center;text-align:center;font-family:'DejaVu Sans','Liberation Sans',sans-serif;font-size:7.1px;font-weight:normal;color:#000;line-height:9.3px;white-space:nowrap;-webkit-text-stroke:0.12px #000;"><span>Cra 11 con Av Pedro de<br>Heredia</span></div>
<div style="position:absolute;left:34px;top:934px;width:105px;height:12px;display:flex;align-items:center;justify-content:center;text-align:center;font-family:'Liberation Sans',sans-serif;font-size:8.8px;font-weight:normal;color:#222;line-height:1.15;white-space:nowrap;-webkit-text-stroke:0.15px #222;"><span><span style="display:inline-block;transform:scaleX(0.9);">La via se encuentra</span></span></div>
<div style="position:absolute;left:140px;top:934px;width:99px;height:12px;display:flex;align-items:center;justify-content:center;text-align:center;font-family:'Liberation Sans',sans-serif;font-size:8.8px;font-weight:normal;color:#222;line-height:1.15;white-space:nowrap;-webkit-text-stroke:0.15px #222;"><span><span style="display:inline-block;transform:scaleX(0.9);">Gran parte de la via se</span></span></div>
<div style="position:absolute;left:240px;top:934px;width:104px;height:12px;display:flex;align-items:center;justify-content:center;text-align:center;font-family:'Liberation Sans',sans-serif;font-size:8.8px;font-weight:normal;color:#222;line-height:1.15;white-space:nowrap;-webkit-text-stroke:0.15px #222;"><span><span style="display:inline-block;transform:scaleX(0.9);">La via se encuentra</span></span></div>
<div style="position:absolute;left:345px;top:934px;width:106px;height:12px;display:flex;align-items:center;justify-content:center;text-align:center;font-family:'Liberation Sans',sans-serif;font-size:8.8px;font-weight:normal;color:#222;line-height:1.15;white-space:nowrap;-webkit-text-stroke:0.15px #222;"><span><span style="display:inline-block;transform:scaleX(0.9);">La via se encuentra</span></span></div>
<div style="position:absolute;left:452px;top:934px;width:109px;height:12px;display:flex;align-items:center;justify-content:center;text-align:center;font-family:'Liberation Sans',sans-serif;font-size:8.8px;font-weight:normal;color:#222;line-height:1.15;white-space:nowrap;-webkit-text-stroke:0.15px #222;"><span><span style="display:inline-block;transform:scaleX(0.9);">La via se encuentra</span></span></div>
<div style="position:absolute;left:562px;top:934px;width:113px;height:12px;display:flex;align-items:center;justify-content:center;text-align:center;font-family:'Liberation Sans',sans-serif;font-size:8.8px;font-weight:normal;color:#222;line-height:1.15;white-space:nowrap;-webkit-text-stroke:0.15px #222;"><span><span style="display:inline-block;transform:scaleX(0.9);">La via se encuentra</span></span></div>
<svg style="left:34px;top:842px;width:103.3px;height:86.2px;" viewBox="28 42 707 590" preserveAspectRatio="none">
<defs><filter id="nz1" x="0" y="0" width="100%" height="100%"><feTurbulence type="fractalNoise" baseFrequency="0.075" numOctaves="2" seed="7" result="n"/><feColorMatrix type="matrix" values="0 0 0 0 0  0 0 0 0 0  0 0 0 0 0  1.3 1.3 0 0 -0.85"/></filter><filter id="b1" x="-5%" y="-5%" width="110%" height="110%"><feGaussianBlur stdDeviation="11"/></filter><clipPath id="c1"><rect x="28" y="42" width="707" height="590"/></clipPath></defs>
<g clip-path="url(#c1)"><rect x="28" y="42" width="707" height="590" fill="#3f4c3c"/>
<g filter="url(#b1)">
<polygon points="28,42 430,42 410,130 330,150 230,150 120,170 28,260" fill="#7d7a6c"/>
<polygon points="130,42 400,42 390,120 200,130" fill="#b0a898"/>
<polygon points="28,60 120,50 110,110 28,130" fill="#8f7f62"/>
<polygon points="430,42 560,42 500,120 440,110" fill="#2f3a2c"/>
<polygon points="480,330 735,130 735,632 640,632 600,520 520,420" fill="#3a5239"/><polygon points="500,330 600,300 640,400 560,420" fill="#1f2e20"/><polygon points="600,480 735,420 735,560 660,600" fill="#4a6a46"/><polygon points="640,150 735,100 735,240 680,260" fill="#22321f"/>
<polygon points="560,180 735,60 735,300 640,330" fill="#3e5a3c"/>
<polygon points="90,380 300,340 400,420 330,520 200,632 120,632 160,480" fill="#334a34"/>
<polygon points="28,300 200,230 230,300 28,390" fill="#4a5240"/>
<!-- roads -->
<path d="M28 385 L240 310" stroke="#a09e90" stroke-width="40" fill="none"/>
<path d="M28 250 L120 185 L250 205" stroke="#8a887c" stroke-width="36" fill="none"/>
<path d="M440 195 L560 130 L700 42" stroke="#9c9a8a" stroke-width="42" fill="none"/>
<path d="M400 340 L480 440 L560 560 L610 632" stroke="#9c9a8a" stroke-width="52" fill="none"/>
<path d="M420 360 L520 500 L580 632" stroke="#55564c" stroke-width="10" fill="none"/>
<path d="M590 170 L650 240 L735 300" stroke="#6c6e5e" stroke-width="12" fill="none"/>
<ellipse cx="343" cy="250" rx="126" ry="92" fill="#a3a193"/>
<ellipse cx="352" cy="247" rx="97" ry="70" fill="#3c3e38"/>
<!-- sand -->
<polygon points="28,400 130,395 175,510 120,632 28,632" fill="#c3ab8a"/>
<polygon points="270,540 400,470 470,500 500,600 430,632 300,632" fill="#bfb09a"/>
<polygon points="560,250 610,250 610,280 560,280" fill="#c09a8c"/><polygon points="620,300 655,300 655,335 620,335" fill="#c8949a"/><polygon points="660,245 690,245 690,280 660,280" fill="#b89a8c"/>
<rect x="492" y="196" width="26" height="22" fill="#ddd"/><rect x="196" y="306" width="30" height="18" fill="#ccc"/><rect x="392" y="378" width="24" height="18" fill="#ccc"/>
</g>
<rect x="28" y="42" width="707" height="590" filter="url(#nz1)" opacity=".38"/>
<circle cx="347" cy="265" r="12" fill="#f25a8c"/><circle cx="347" cy="265" r="4" fill="#fff"/>
<rect x="52" y="134" width="16" height="22" rx="6" fill="#7fa4f0"/>
<rect x="335" y="605" width="14" height="16" fill="#6f9af0"/><rect x="352" y="605" width="12" height="16" fill="#e8a040"/><rect x="367" y="605" width="14" height="16" fill="#7fa4e8"/>
</g></svg>

<svg style="left:140px;top:843px;width:96px;height:86.6px;" viewBox="28 48 657 594" preserveAspectRatio="none">
<defs><filter id="nz2" x="0" y="0" width="100%" height="100%"><feTurbulence type="fractalNoise" baseFrequency="0.075" numOctaves="2" seed="14" result="n"/><feColorMatrix type="matrix" values="0 0 0 0 0  0 0 0 0 0  0 0 0 0 0  1.3 1.3 0 0 -0.85"/></filter><filter id="b2" x="-5%" y="-5%" width="110%" height="110%"><feGaussianBlur stdDeviation="11"/></filter><clipPath id="c2"><rect x="28" y="48" width="657" height="594"/></clipPath></defs>
<g clip-path="url(#c2)"><rect x="28" y="48" width="657" height="594" fill="#2f4a30"/>
<g filter="url(#b2)">
<polygon points="400,48 685,48 685,300 600,330 480,260 420,150" fill="#37583a"/>
<polygon points="60,60 200,60 190,170 90,180" fill="#263e2a"/>
<polygon points="28,440 130,440 200,620 28,642" fill="#2b4a2c"/>
<polygon points="520,420 685,400 685,642 560,642" fill="#2c4a30"/>
<!-- urban -->
<polygon points="230,60 360,60 400,160 380,230 470,300 500,380 540,420 500,470 520,560 480,620 400,560 340,520 250,500 190,440 150,330 140,240 200,180" fill="#6b6a62"/>
<polygon points="330,210 420,220 440,290 360,290" fill="#3f5a3c"/>
<polygon points="250,360 330,360 340,420 260,420" fill="#777468"/>
<!-- left sandy -->
<polygon points="28,170 100,180 150,220 120,300 110,460 28,470" fill="#b3a88e"/>
<polygon points="90,180 160,200 150,230 100,220" fill="#d0b88a"/>
<path d="M40 48 L110 300 L170 460 L220 620" stroke="#a39c8c" stroke-width="40" fill="none"/>
<path d="M75 48 L150 330 L250 642" stroke="#5a5c50" stroke-width="8" fill="none"/>
<!-- patches -->
<polygon points="550,330 600,320 620,380 570,400" fill="#c07058"/>
<polygon points="330,540 400,550 400,620 320,610" fill="#b0a080"/>
<polygon points="470,560 520,560 510,600 470,600" fill="#a8a080"/>
<rect x="240" y="395" width="28" height="34" fill="#c8a070"/>
<path d="M470 48 L630 240 L610 400 L600 560 L580 642" stroke="#c89088" stroke-width="5" fill="none"/>
<path d="M60 60 L100 220 L160 420 L230 560 L360 642" stroke="#c88080" stroke-width="4" fill="none"/>
</g>
<rect x="28" y="48" width="657" height="594" filter="url(#nz2)" opacity=".38"/>
<g fill="#f0a020"><ellipse cx="262" cy="68" rx="10" ry="13"/><ellipse cx="211" cy="305" rx="10" ry="13"/><ellipse cx="287" cy="436" rx="10" ry="13"/></g>
<g fill="#a8c4f0"><circle cx="292" cy="380" r="9"/><circle cx="404" cy="426" r="10"/><circle cx="216" cy="606" r="9"/><circle cx="37" cy="172" r="8"/></g>
<rect x="28" y="620" width="66" height="22" fill="#9fdcb0"/>
</g></svg>

<svg style="left:240px;top:840.4px;width:84px;height:87.2px;" viewBox="28 30 575 598" preserveAspectRatio="none">
<defs><filter id="nz3" x="0" y="0" width="100%" height="100%"><feTurbulence type="fractalNoise" baseFrequency="0.075" numOctaves="2" seed="21" result="n"/><feColorMatrix type="matrix" values="0 0 0 0 0  0 0 0 0 0  0 0 0 0 0  1.3 1.3 0 0 -0.85"/></filter><filter id="b3" x="-5%" y="-5%" width="110%" height="110%"><feGaussianBlur stdDeviation="11"/></filter><clipPath id="c3"><rect x="28" y="30" width="575" height="598"/></clipPath></defs>
<g clip-path="url(#c3)"><rect x="28" y="30" width="575" height="598" fill="#8a8378"/>
<g filter="url(#b3)">
<!-- reddish -->
<polygon points="180,30 310,30 330,150 200,330 110,500 28,540 28,400 150,220" fill="#80544c"/>
<polygon points="28,30 190,30 180,120 120,200 28,330" fill="#6a6a60"/>
<polygon points="28,160 120,170 50,320 28,330" fill="#d6d4cc"/><polygon points="120,60 170,70 150,130 110,120" fill="#d8d0cc"/>
<!-- tan top right -->
<polygon points="400,30 603,30 603,390 520,300 440,130" fill="#a39c78"/>
<polygon points="430,40 520,40 603,300 603,390 540,300" fill="#b3ab84"/>
<path d="M430 170 L603 175" stroke="#55564c" stroke-width="26" fill="none"/>
<path d="M560 30 L603 110" stroke="#5a5a55" stroke-width="40" fill="none"/>
<!-- main dark road -->
<path d="M340 30 L440 230 L520 380 L603 560" stroke="#484745" stroke-width="46" fill="none"/>
<!-- light roads -->
<path d="M370 180 L260 380 L130 628" stroke="#9c9890" stroke-width="60" fill="none"/>
<path d="M330 200 L190 480 L100 628" stroke="#6e6c68" stroke-width="14" fill="none"/>
<path d="M440 260 L340 330 L280 470" stroke="#9a968c" stroke-width="30" fill="none"/>
<path d="M320 430 L420 470 L470 560 L500 628" stroke="#8a8880" stroke-width="34" fill="none"/>
<polygon points="360,330 460,300 500,400 420,400" fill="#9c8c7c"/>
<polygon points="300,520 400,500 440,600 330,628 290,600" fill="#4a4a38"/>
<polygon points="450,450 540,470 600,600 520,628 470,560" fill="#6c665c"/>
<rect x="385" y="150" width="30" height="60" fill="#e0e0dc" transform="rotate(-25 400 180)"/>
<polygon points="100,500 150,430 175,450 125,530" fill="#d8d8d4"/>
<!-- trees -->
<g fill="#356638"><ellipse cx="128" cy="250" rx="30" ry="30"/><ellipse cx="100" cy="295" rx="24" ry="24"/><ellipse cx="58" cy="358" rx="28" ry="30"/><ellipse cx="255" cy="240" rx="22" ry="26"/><ellipse cx="290" cy="180" rx="18" ry="20"/><ellipse cx="452" cy="428" rx="46" ry="34"/><ellipse cx="195" cy="360" rx="18" ry="20"/></g>
<g fill="#d8b860"><rect x="258" y="362" width="16" height="12"/><rect x="236" y="402" width="16" height="12"/><rect x="322" y="484" width="20" height="14"/></g>
</g>
<rect x="28" y="30" width="575" height="598" filter="url(#nz3)" opacity=".3"/>
<circle cx="182" cy="143" r="10" fill="#ff6a7a"/><circle cx="182" cy="143" r="4" fill="#fff"/>
<path d="M34 262 l12 -8 l6 12 l-10 8z" fill="#5a8af0"/>
</g></svg>

<svg style="left:344.6px;top:840.1px;width:105.3px;height:88.5px;" viewBox="18 28 722 607" preserveAspectRatio="none">
<defs><filter id="nz4" x="0" y="0" width="100%" height="100%"><feTurbulence type="fractalNoise" baseFrequency="0.075" numOctaves="2" seed="28" result="n"/><feColorMatrix type="matrix" values="0 0 0 0 0  0 0 0 0 0  0 0 0 0 0  1.3 1.3 0 0 -0.85"/></filter><filter id="b4" x="-5%" y="-5%" width="110%" height="110%"><feGaussianBlur stdDeviation="11"/></filter><clipPath id="c4"><rect x="18" y="28" width="722" height="607"/></clipPath></defs>
<g clip-path="url(#c4)"><rect x="18" y="28" width="722" height="607" fill="#7c7a72"/>
<g filter="url(#b4)">
<polygon points="18,28 440,28 440,300 18,110" fill="#77746a"/>
<polygon points="18,28 85,28 85,100 18,80" fill="#aaa496"/>
<polygon points="85,30 140,30 140,125 85,105" fill="#b45a58"/>
<polygon points="140,30 190,30 190,150 140,130" fill="#5c5048"/>
<polygon points="195,30 250,30 250,160 195,150" fill="#9a9484"/>
<polygon points="290,50 340,55 335,165 285,160" fill="#b9b8b2"/>
<polygon points="255,30 290,30 285,160 255,150" fill="#5e5c56"/>
<polygon points="345,30 440,30 440,260 345,215" fill="#6e6c64"/>
<polygon points="410,30 440,30 440,300 410,280" fill="#5a5e58"/>
<!-- right side -->
<polygon points="440,28 740,28 740,460 440,320" fill="#7b7668"/>
<polygon points="470,60 560,60 560,140 470,130" fill="#5e5548"/>
<polygon points="450,28 600,28 590,60 450,60" fill="#434c3a"/>
<polygon points="600,28 740,28 740,200 680,210 610,120" fill="#454e3c"/>
<ellipse cx="672" cy="185" rx="34" ry="28" fill="#38482f"/><ellipse cx="710" cy="90" rx="30" ry="40" fill="#384630"/>
<polygon points="500,160 575,170 545,310 490,300" fill="#9c9a92"/>
<polygon points="580,230 650,250 620,350 560,330" fill="#6a6258"/>
<polygon points="660,240 720,180 740,200 680,360 640,360" fill="#b8b0a0"/>
<polygon points="440,140 490,140 480,260 440,250" fill="#a89888"/>
<!-- main road -->
<path d="M18 150 L250 260 L480 370 L740 490" stroke="#4a4a4a" stroke-width="96" fill="none"/>
<path d="M18 110 L250 215 L480 320 L740 430" stroke="#3c3c3a" stroke-width="16" fill="none"/>
<path d="M18 170 L400 345 L740 500" stroke="#6a6a68" stroke-width="8" fill="none"/>
<!-- lower road -->
<path d="M18 290 L200 390 L420 500 L620 600" stroke="#8a8880" stroke-width="60" fill="none"/>
<path d="M18 250 L120 300 L230 320" stroke="#6c7068" stroke-width="30" fill="none"/>
<!-- green median -->
<polygon points="230,310 330,340 400,400 330,400 250,350" fill="#3e4a34"/>
<polygon points="420,410 560,440 600,490 560,530 470,500 410,450" fill="#36452c"/>
<ellipse cx="500" cy="470" rx="50" ry="30" fill="#2f3d27"/>
<!-- lower left buildings -->
<polygon points="18,340 110,400 60,560 18,600" fill="#7a6a5a"/>
<polygon points="110,405 205,450 175,540 90,495" fill="#b5a78f"/>
<polygon points="60,500 150,540 130,635 18,635 18,600" fill="#6e6258"/>
<polygon points="200,500 300,540 420,600 400,635 180,635" fill="#70706c"/>
<polygon points="420,590 560,620 560,635 400,635" fill="#a8a69e"/>
<polygon points="620,500 700,540 680,620 600,590" fill="#8a8880"/>
<polygon points="640,510 700,540 690,580 630,555" fill="#55534e"/>
<!-- vehicles -->
<g fill="#e8c830"><rect x="425" y="318" width="40" height="14" transform="rotate(25 445 325)"/><rect x="395" y="505" width="34" height="16" transform="rotate(28 410 512)"/><rect x="440" y="480" width="24" height="12" transform="rotate(28 450 486)"/></g>
<g fill="#d8d8d8"><rect x="120" y="340" width="26" height="12"/><rect x="300" y="445" width="20" height="12"/><rect x="460" y="355" width="24" height="12"/><rect x="520" y="385" width="24" height="12"/><rect x="470" y="520" width="22" height="12"/><rect x="60" y="165" width="26" height="12"/><rect x="340" y="460" width="22" height="12"/><rect x="500" y="540" width="22" height="12"/></g>
<rect x="190" y="385" width="40" height="20" fill="#e07040" transform="rotate(30 210 395)"/>
<rect x="44" y="470" width="20" height="70" fill="#2a4a8a" transform="rotate(25 54 505)"/>
<rect x="716" y="495" width="24" height="60" fill="#2040a0"/>
</g>
<rect x="18" y="28" width="722" height="607" filter="url(#nz4)" opacity=".3"/>
<g fill="#8fb0f4"><circle cx="372" cy="263" r="10"/><circle cx="516" cy="205" r="9"/><circle cx="126" cy="262" r="9"/><circle cx="184" cy="106" r="8"/><circle cx="620" cy="475" r="9"/><circle cx="38" cy="484" r="8"/><circle cx="266" cy="514" r="7"/></g>
<rect x="70" y="380" width="18" height="30" rx="5" fill="#5a8af0"/>
</g></svg>

<svg style="left:453.2px;top:842.1px;width:105.4px;height:87.5px;" viewBox="22 42 723 600" preserveAspectRatio="none">
<defs><filter id="nz5" x="0" y="0" width="100%" height="100%"><feTurbulence type="fractalNoise" baseFrequency="0.075" numOctaves="2" seed="35" result="n"/><feColorMatrix type="matrix" values="0 0 0 0 0  0 0 0 0 0  0 0 0 0 0  1.3 1.3 0 0 -0.85"/></filter><filter id="b5" x="-5%" y="-5%" width="110%" height="110%"><feGaussianBlur stdDeviation="11"/></filter><clipPath id="c5"><rect x="22" y="42" width="723" height="600"/></clipPath></defs>
<g clip-path="url(#c5)"><rect x="22" y="42" width="723" height="600" fill="#6c675c"/>
<g filter="url(#b5)">
<!-- top left buildings -->
<polygon points="22,42 180,42 260,230 180,300 22,380" fill="#6a645a"/>
<polygon points="22,150 80,140 120,200 200,215 140,300 60,380 22,380" fill="#cbc7bb"/>
<polygon points="70,100 140,90 190,180 120,200" fill="#5c4a40"/>
<polygon points="22,42 70,42 60,90 22,100" fill="#8a3a34"/>
<polygon points="22,400 100,380 70,460 22,490" fill="#bdb9ad"/>
<polygon points="110,330 210,290 240,340 150,400" fill="#8a867c"/>
<!-- top white roofs -->
<polygon points="330,42 520,42 450,130 380,100 330,110 300,80" fill="#d3d3cf"/>
<polygon points="210,60 300,50 330,110 260,150" fill="#a8a498"/>
<polygon points="520,42 620,42 540,130 480,110" fill="#8a7c6c"/>
<ellipse cx="480" cy="150" rx="46" ry="36" fill="#2f5a30"/>
<!-- roads -->
<path d="M180 42 L240 170 L290 260" stroke="#50504c" stroke-width="50" fill="none"/>
<path d="M22 620 L200 470 L330 400" stroke="#847c6c" stroke-width="70" fill="none"/>
<path d="M500 220 L620 120 L745 60" stroke="#877f6e" stroke-width="70" fill="none"/>
<path d="M560 150 L745 100" stroke="#6a6a58" stroke-width="14" fill="none"/>
<ellipse cx="400" cy="310" rx="150" ry="130" fill="#857d6d"/>
<ellipse cx="400" cy="320" rx="92" ry="74" fill="#5c5c42"/>
<g fill="#2c3a28"><ellipse cx="356" cy="296" rx="22" ry="18"/><ellipse cx="420" cy="250" rx="20" ry="14"/><ellipse cx="474" cy="318" rx="18" ry="16"/><ellipse cx="420" cy="362" rx="24" ry="16"/></g>
<!-- right buildings -->
<polygon points="560,200 745,150 745,642 640,642 520,440 540,330" fill="#6e6a62"/>
<polygon points="660,170 745,150 745,280 690,260" fill="#cfcbbf"/>
<polygon points="600,280 745,290 745,330 600,320" fill="#3e4a38"/>
<polygon points="540,420 640,400 700,470 660,540 560,500" fill="#7c7870"/>
<polygon points="620,400 745,380 745,470 680,470" fill="#8c8880"/>
<polygon points="560,300 600,290 600,330 565,335" fill="#c86a6a"/>
<ellipse cx="720" cy="610" rx="30" ry="34" fill="#2c4a2a"/>
<!-- bottom -->
<polygon points="230,470 430,440 520,520 640,642 150,642 200,540" fill="#3c3c32"/>
<path d="M230 470 L400 440 L500 480 L640 642" stroke="#6e6a5e" stroke-width="30" fill="none"/>
<path d="M200 560 L380 540 L520 600" stroke="#8a8674" stroke-width="18" fill="none"/>
<polygon points="270,480 320,480 320,530 275,525" fill="#c88880"/>
<polygon points="22,560 120,500 200,560 140,642 22,642" fill="#7c7564"/>
<ellipse cx="300" cy="620" rx="34" ry="30" fill="#2c4a2a"/><ellipse cx="160" cy="610" rx="30" ry="26" fill="#2a3a28"/>
<polygon points="500,420 560,500 640,600 600,620 480,470" fill="#504c48"/>
</g>
<rect x="22" y="42" width="723" height="600" filter="url(#nz5)" opacity=".3"/>
<g fill="#f0a020"><ellipse cx="640" cy="176" rx="11" ry="14"/><ellipse cx="124" cy="282" rx="11" ry="14"/><ellipse cx="532" cy="352" rx="11" ry="14"/><ellipse cx="607" cy="364" rx="11" ry="14"/></g>
<circle cx="234" cy="265" r="11" fill="#30b8c0"/><circle cx="246" cy="320" r="10" fill="#8fa0f0"/><circle cx="194" cy="68" r="9" fill="#8fa0f0"/><circle cx="142" cy="232" r="11" fill="#e85050"/><circle cx="102" cy="466" r="12" fill="#e86070"/><circle cx="444" cy="348" r="10" fill="#40c060"/><circle cx="652" cy="520" r="9" fill="#8fb8e8"/><circle cx="666" cy="590" r="8" fill="#8fb8e8"/>
<rect x="560" y="220" width="34" height="24" rx="4" fill="#e8e8e8"/><rect x="104" y="562" width="34" height="26" rx="4" fill="#dcdcdc"/>
<rect x="305" y="338" width="120" height="14" fill="#2a8a4a" opacity=".7"/>
</g></svg>

<svg style="left:563.6px;top:841.1px;width:108.1px;height:87.7px;" viewBox="35 32 681 552" preserveAspectRatio="none">
<defs><filter id="nz6" x="0" y="0" width="100%" height="100%"><feTurbulence type="fractalNoise" baseFrequency="0.075" numOctaves="2" seed="42" result="n"/><feColorMatrix type="matrix" values="0 0 0 0 0  0 0 0 0 0  0 0 0 0 0  1.3 1.3 0 0 -0.85"/></filter><filter id="b6" x="-5%" y="-5%" width="110%" height="110%"><feGaussianBlur stdDeviation="11"/></filter><clipPath id="c6"><rect x="35" y="32" width="681" height="552"/></clipPath></defs>
<g clip-path="url(#c6)"><rect x="35" y="32" width="681" height="552" fill="#a98c82"/>
<g filter="url(#b6)">
<polygon points="35,32 110,32 260,240 180,330 35,400" fill="#ae8e86"/>
<polygon points="70,150 150,160 170,260 80,300" fill="#b09c96"/>
<!-- top dark area -->
<polygon points="190,32 716,32 716,60 520,150 400,220 320,240" fill="#6a6258"/>
<polygon points="300,60 520,60 470,150 380,200" fill="#7a7166"/>
<polygon points="480,32 716,32 716,50 560,60" fill="#3c3430"/>
<rect x="400" y="32" width="70" height="16" fill="#e8e8e4"/>
<!-- roads -->
<path d="M90 32 L200 140 L330 270" stroke="#857868" stroke-width="70" fill="none"/>
<path d="M716 90 L560 180 L350 280" stroke="#746a5e" stroke-width="110" fill="none"/>
<path d="M716 200 L620 260 L520 340 L440 460 L380 584" stroke="#8c8274" stroke-width="50" fill="none"/>
<path d="M716 270 L600 330 L520 400 L440 584" stroke="#4c4a40" stroke-width="22" fill="none"/>
<path d="M330 270 L180 370 L35 470" stroke="#84746a" stroke-width="90" fill="none"/>
<path d="M340 290 L300 420 L240 584" stroke="#90806f" stroke-width="60" fill="none"/>
<path d="M400 300 L380 440 L340 584" stroke="#5a544a" stroke-width="40" fill="none"/>
<ellipse cx="330" cy="290" rx="90" ry="70" fill="#9a8276"/>
<polygon points="300,400 350,390 330,500 260,584 220,584" fill="#9c8878"/>
<!-- lower left -->
<polygon points="35,500 200,420 260,460 240,584 35,584" fill="#a08880"/>
<!-- plaza bottom right -->
<polygon points="470,584 560,420 716,300 716,584" fill="#ccb6ae"/>
<polygon points="690,450 716,440 716,560 690,540" fill="#d8c0a8"/>
<!-- vehicles -->
<g fill="#e8e8e8"><rect x="490" y="205" width="90" height="24" transform="rotate(-25 535 217)"/><rect x="556" y="118" width="30" height="18" transform="rotate(-25 570 127)"/><rect x="640" y="70" width="30" height="18" transform="rotate(-25 655 79)"/><rect x="60" y="478" width="60" height="22" transform="rotate(-28 90 489)"/><rect x="186" y="490" width="34" height="44" transform="rotate(20 203 512)"/><rect x="160" y="300" width="24" height="14"/><rect x="150" y="40" width="20" height="30" transform="rotate(-30 160 55)"/><rect x="296" y="548" width="30" height="22" transform="rotate(-30 311 559)"/></g>
<g fill="#e8d060"><rect x="130" y="84" width="22" height="14"/><rect x="176" y="92" width="18" height="12"/><rect x="322" y="212" width="24" height="14"/><rect x="370" y="226" width="26" height="16"/><rect x="570" y="90" width="24" height="14"/><rect x="606" y="66" width="24" height="14"/><rect x="220" y="292" width="22" height="14"/></g>
<rect x="130" y="438" width="70" height="24" fill="#e06040" transform="rotate(-28 165 450)"/>
<rect x="466" y="130" width="30" height="16" fill="#a03030" transform="rotate(-25 480 138)"/>
<rect x="700" y="100" width="16" height="30" fill="#c84040"/>
</g>
<rect x="35" y="32" width="681" height="552" filter="url(#nz6)" opacity=".16"/>
<g stroke="#ad948c" stroke-width="4" fill="none" opacity=".8"><path d="M520 584 L716 360"/><path d="M580 584 L716 430"/><path d="M640 584 L716 500"/><path d="M540 470 L716 560"/><path d="M590 410 L716 480"/><path d="M640 360 L716 400"/></g>
<rect x="552" y="236" width="50" height="24" rx="8" fill="#f0f0f0" stroke="#888" stroke-width="2"/>
<rect x="362" y="570" width="22" height="14" fill="#6f9af0"/><rect x="388" y="570" width="18" height="14" fill="#e8a040"/><rect x="410" y="570" width="22" height="14" fill="#7fa4e8"/>
</g></svg>

<div style="position:absolute;left:33px;top:146px;width:1px;height:797px;background:#000;"></div>
<div style="position:absolute;left:675px;top:146px;width:1px;height:797px;background:#000;"></div>
<div style="position:absolute;left:0px;top:943px;width:768px;height:81px;background:#fff;"></div>
</body></html>
